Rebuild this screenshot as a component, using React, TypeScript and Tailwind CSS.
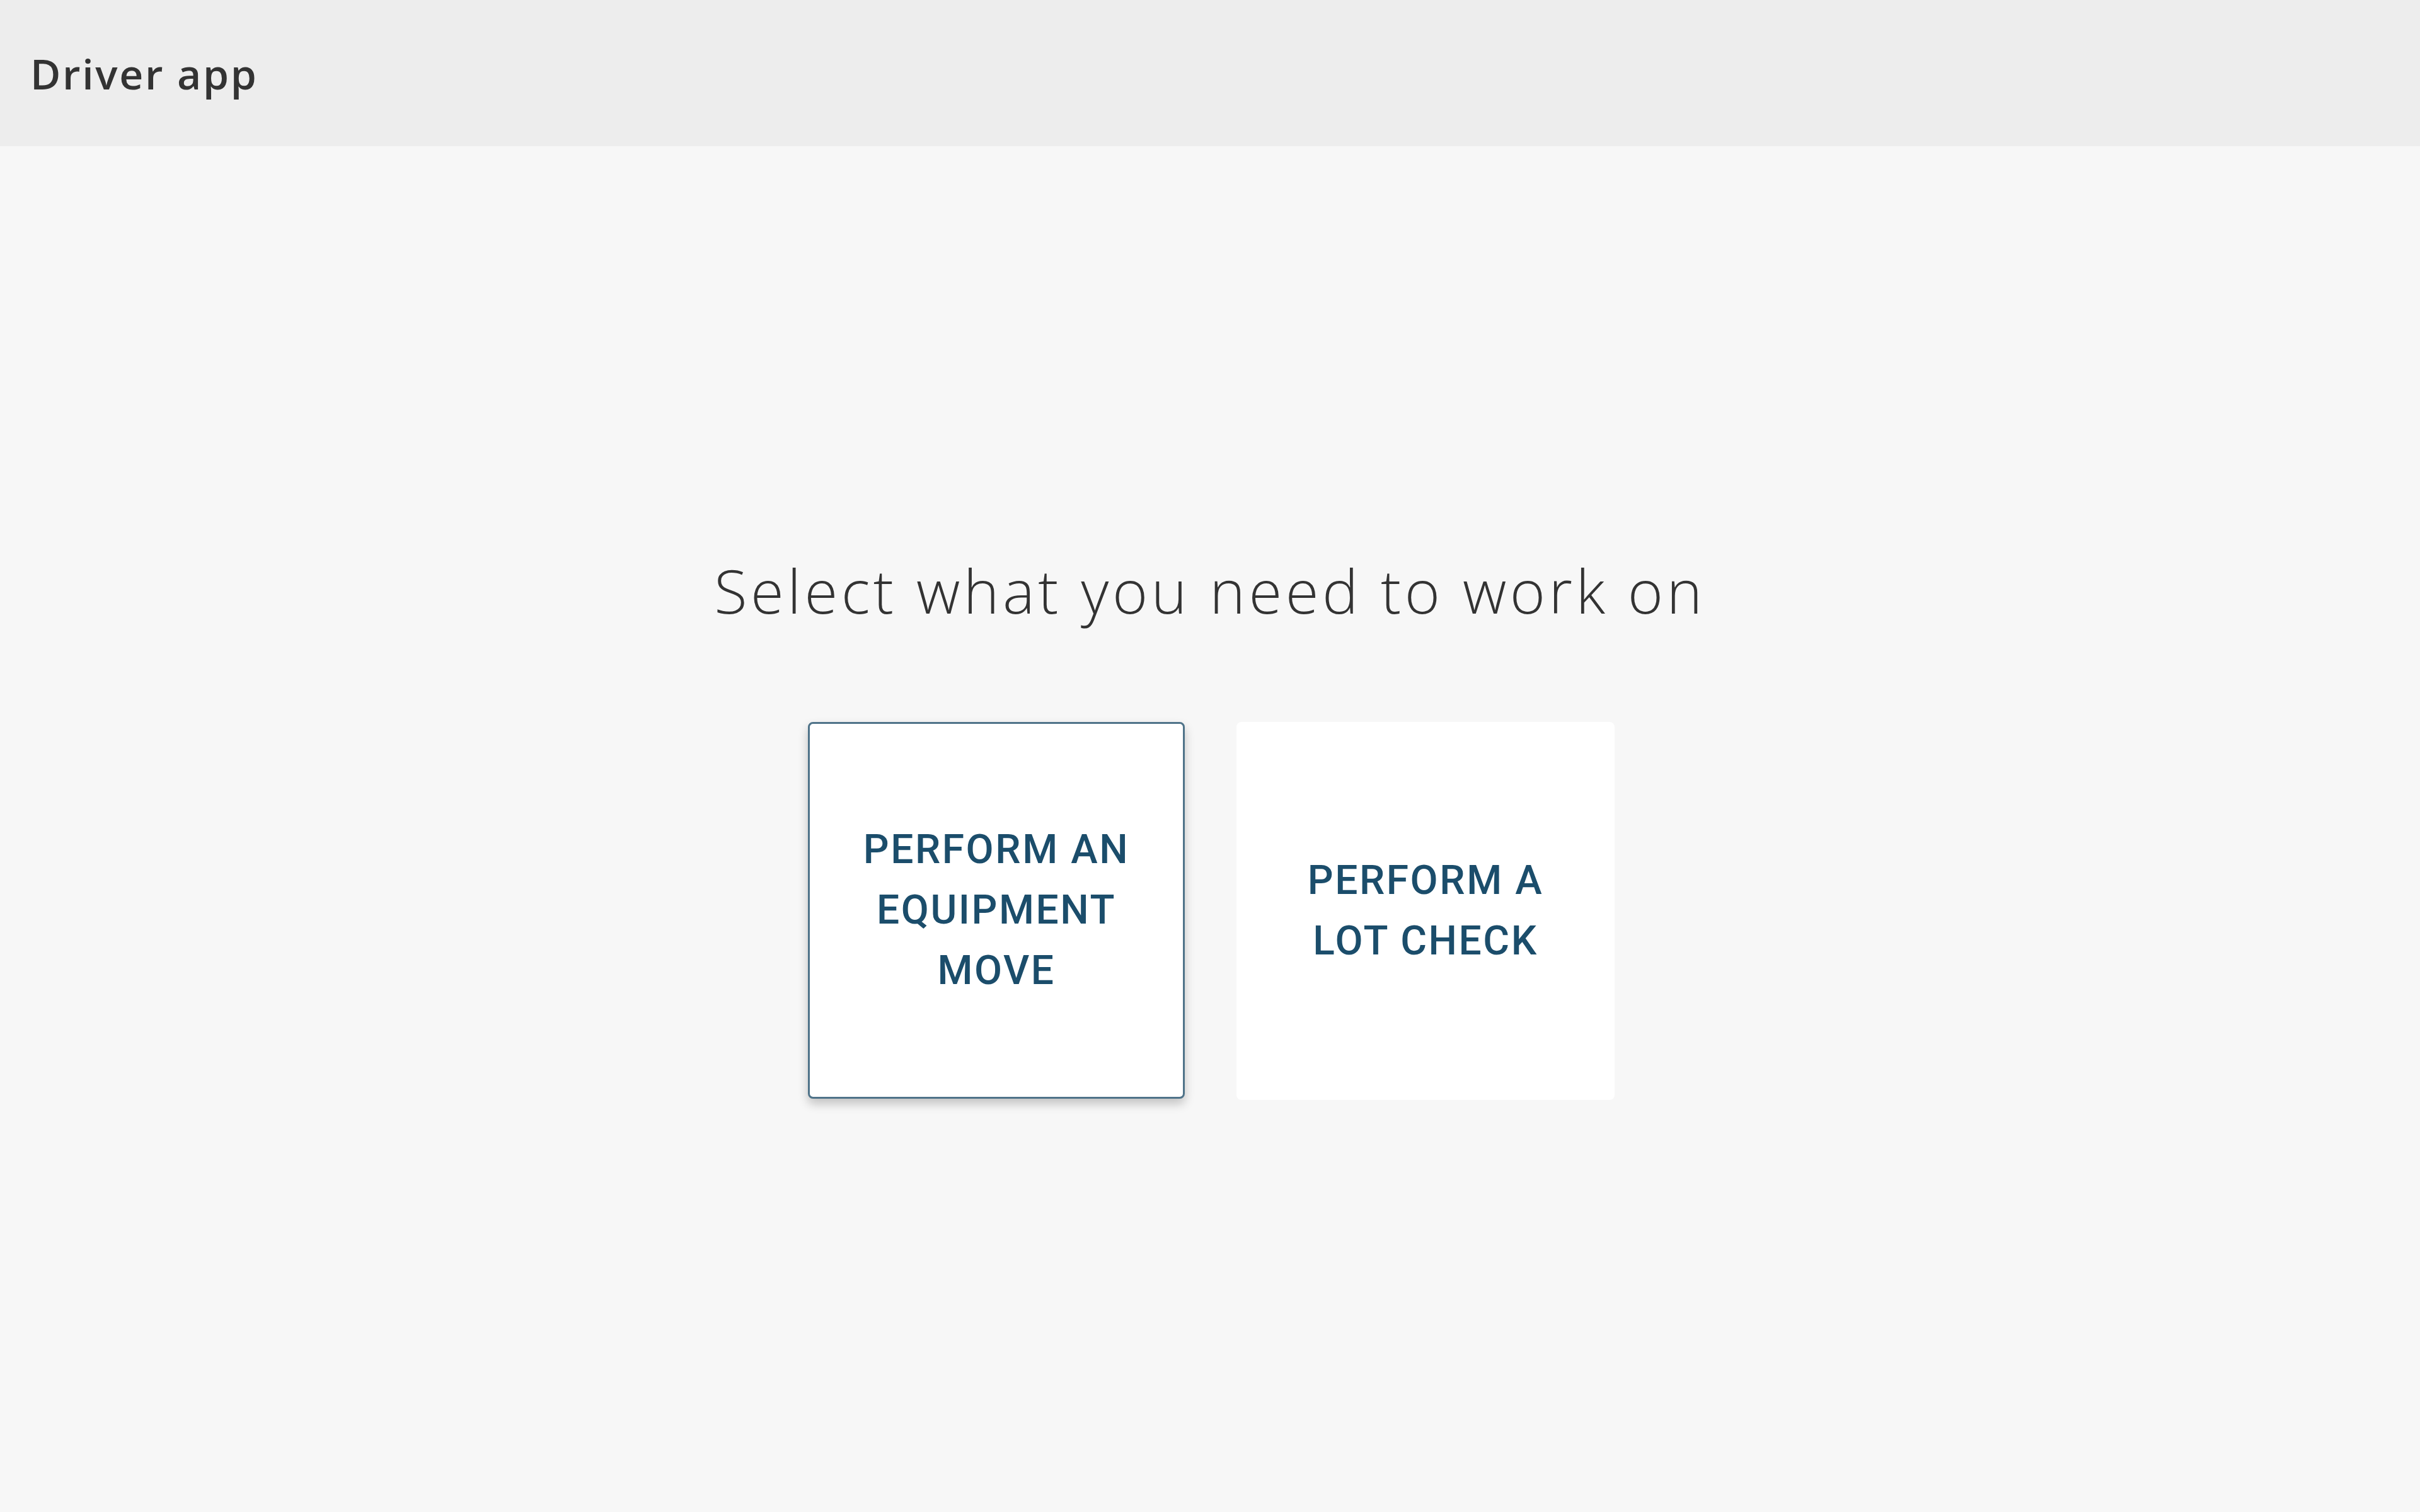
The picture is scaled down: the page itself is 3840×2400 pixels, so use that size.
import React from "react";

export default function App() {
  return (
    <div className="flex min-h-[2400px] w-full flex-col bg-[#f7f7f7]">
      <header className="flex h-[232px] shrink-0 items-center bg-[#ededed] pl-[48px]">
        <h1
          className="text-[66px] font-semibold leading-none tracking-[2.7px] text-[#333333]"
          style={{ fontFamily: '"Open Sans", "DejaVu Sans", sans-serif' }}
        >
          Driver app
        </h1>
      </header>
      <main className="flex flex-1 flex-col items-center pt-[647px]">
        <h2
          className="text-[96px] font-light leading-[1.2] tracking-[5.5px] text-[#333333]"
          style={{ fontFamily: '"Open Sans", "DejaVu Sans", sans-serif' }}
        >
          Select what you need to work on
        </h2>
        <div className="ml-[4px] mt-[152px] flex gap-[82px]">
          <button
            className="flex h-[598px] w-[598px] items-center justify-center rounded-[8px] border-[3px] border-[#4f7389] bg-white px-[56px] text-center text-[64px] font-medium uppercase leading-[96px] tracking-[2.6px] text-[#1b4d6b] shadow-[0_8px_16px_rgba(0,0,0,0.22)]"
            style={{ fontFamily: 'Roboto, "Liberation Sans", sans-serif' }}
          >
            Perform an equipment move
          </button>
          <button
            className="flex h-[600px] w-[600px] items-center justify-center rounded-[8px] bg-white px-[60px] text-center text-[64px] font-medium uppercase leading-[96px] tracking-[2.6px] text-[#1b4d6b]"
            style={{ fontFamily: 'Roboto, "Liberation Sans", sans-serif' }}
          >
            Perform a lot check
          </button>
        </div>
      </main>
    </div>
  );
}
